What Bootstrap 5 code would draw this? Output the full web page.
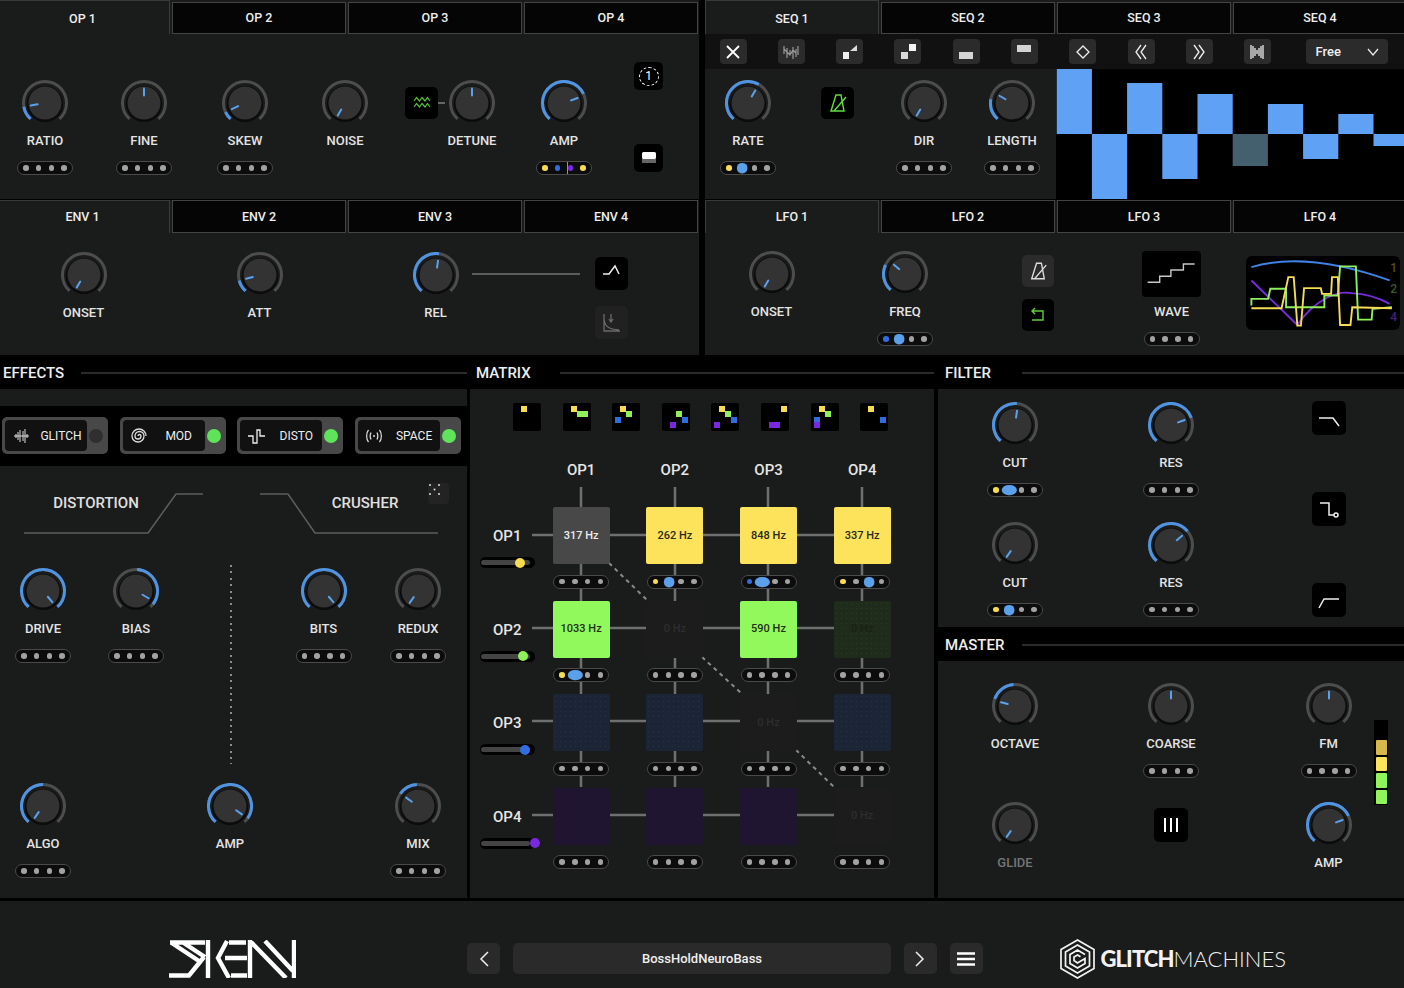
<!doctype html>
<html lang="en">
<head>
<meta charset="utf-8">
<title>Sken</title>
<link href="https://cdn.jsdelivr.net/npm/bootstrap@5.3.0/dist/css/bootstrap.min.css" rel="stylesheet">
<style>
:root{--pnl:#1a1b1b;--blk:#000;--lin:#6f6f6f}
html,body{background:#000;margin:0;height:100%;overflow:hidden}
body{font-family:Roboto,"Liberation Sans",sans-serif;font-weight:500;color:#e6e6e6}
.synth{width:1404px;height:988px;overflow:hidden;display:flex;flex-direction:column}
.toprow{display:grid;grid-template-columns:699px 699px;column-gap:6px;grid-template-rows:199px 155px;row-gap:1px;height:355px}
.pane{background:var(--pnl);min-width:0}
.tabs{display:grid;grid-template-columns:170px 174px 174px 174px;column-gap:2px;height:34px;background:var(--pnl)}
.tabs.rt{grid-template-columns:174px 174px 174px 174px}
.tabs .nav-link{display:flex;align-items:center;justify-content:center;padding:1px 0 0;color:#eee;font-size:12.5px;background:#050505;border:1.5px solid #444;border-radius:0;margin-top:2px}
.tabs .nav-link.active{background:var(--pnl);border-bottom:0;border-left:0;border-color:#3a3a3a;margin-top:0;padding:3px 4px 0 0}
.tabs.rt .nav-link.active{border-left:1.5px solid #3a3a3a;padding-right:0}
.tabs.env{height:33px}.tabs.env .nav-link{margin-top:0;padding-top:1px}
.kgrid{display:grid;align-items:start}
.kcell{display:flex;flex-direction:column;align-items:center;min-width:0}
.kn{width:46px;height:46px;flex:none;display:block}
.klab{margin-top:7px;height:16px;line-height:16px;font-size:13px;white-space:nowrap;color:#e4e4e4}
.klab.off{color:#767676}
.klab.wv{margin-top:7px}
.dots{margin-top:12px;flex:none;width:56px;height:14px;border:1.5px solid #4a4a4a;border-radius:8px;background:#0c0c0c;display:flex;align-items:center;justify-content:center;gap:7.2px;position:relative;z-index:2}
.dots i{display:block;width:5.6px;height:5.6px;border-radius:50%;background:#a2a2a2;position:relative}
.dots i.y{background:#f7dc50}.dots i.b{background:#2f6de0}.dots i.p{background:#7a28e0}
.dots i.p::before{content:"";position:absolute;left:-1px;top:-3px;width:1.5px;height:11.6px;background:#5aa0ea}
.dots i.B{background:#5aa0ea;transform:scale(1.75)}
.dots i.E{background:#5aa0ea;transform:scale(2.5,1.7)}
.ibtn{background:#000;border:0;border-radius:5px;padding:0;display:flex;align-items:center;justify-content:center;color:#fff;flex:none}
.ibtn.gr{background:#2b2b2b}
.ibtn.dm{background:#212121}
.ibtn svg{display:block}
.opgrid{grid-template-columns:90px 108px 94px 106px 47px 54px 130px 39px;padding-top:46px}
.wavecell{display:flex;align-items:center;padding-left:7px;margin-top:7px}
.wavecell .ibtn{width:33px;height:32px}
.wavecell b{display:block;width:8px;height:2px;background:#666}
.sidebtns{display:flex;flex-direction:column;align-items:center;justify-content:space-between;height:110px;margin-top:-18px}
.sidebtns .ibtn{width:29px;height:28px}
.dashone{width:20px;height:19px;border:1.5px dashed #fff;border-radius:50%;display:flex;align-items:center;justify-content:center;font-size:12px;line-height:1;color:#fff}
.seqbar{height:35px;background:#111;display:flex;align-items:center;padding-left:14.5px;gap:31.3px}
.seqbar .ibtn{width:27px;height:25px;border-radius:4px;background:#2b2b2b}
.seqsel{margin-left:4px;width:82px;height:25px;border-radius:4px;background:#2b2b2b;color:#f0f0f0;font-size:13px;font-weight:500;border:0;padding:0 9px;display:flex;justify-content:space-between;align-items:center}
.seqbody{display:flex;height:130px}
.seqknobs{width:351px;flex:none;padding-top:11px;grid-template-columns:86px 92px 82px 94px}
.metro{width:33px;height:32px;margin-top:7px}
.seqsteps{flex:1;background:#000;display:block;height:131px}
.envgrid{grid-template-columns:167px 185px 167px 75px 35px;padding-top:19px}
.envline{height:2px;background:#5c5c5c;width:108px;margin-left:-47px;margin-top:21px}
.envbtns{display:flex;flex-direction:column;align-items:center;gap:16px;margin-top:5px}
.envbtns .ibtn{width:33px;height:33px}
.lfogrid{grid-template-columns:133px 134px 133px 133px 160px;padding-top:18px}
.lfobtns{display:flex;flex-direction:column;align-items:center;gap:12px;margin-top:4px;padding-right:1px}
.lfobtns .ibtn{width:32px;height:32px}
.wavebox{width:59px;height:46px;background:#000;border-radius:4px}
.scope{position:relative;width:154px;height:74px;background:#000;border-radius:6px;margin:5px 0 0 8px;overflow:hidden}
.scope svg{display:block}
.scope span{position:absolute;right:3px;font-size:12px;line-height:12px}
.midrow{display:flex;height:546px;flex:none}
.midcol{display:flex;flex-direction:column;flex:none;height:543px}
.shead{height:34px;flex:none;display:flex;align-items:center;padding-left:3px;padding-top:2px;background:#000;font-size:15px;color:#eee}
.shead b{font-weight:500}
.shead hr{margin:0;opacity:1;border:0;height:2px;background:#2b2b2b;flex:1}
.fxsub{height:17px;background:var(--pnl);flex:none}
.fxrow{height:60px;flex:none;padding:11px 0 0 2px;display:flex;gap:11.7px}
.fxbtn{width:106px;height:37px;padding:3px;border-radius:5px;background:#484848;border:0;display:flex;align-items:center;color:#eee}
.fxin{width:82px;height:31px;background:#111;border-radius:4px;display:flex;align-items:center;flex:none;font-size:12px}
.fxin .ico{width:30px;display:flex;justify-content:center;flex:none;padding-left:2px}
.fxin .txt{flex:1;text-align:center}
.led{width:14px;height:14px;border-radius:50%;margin-left:2px;background:#5fe35a;flex:none}
.led.off{background:#2f2f2f}
.fxpane{flex:1;position:relative}
.fxcurve{height:102px;position:relative}
.fxcurve svg{position:absolute;inset:0}
.fxtitle{position:absolute;top:28px;font-size:15px;line-height:18px;transform:translateX(-50%);color:#e0e0e0}
.dice{position:absolute;left:428px;top:17px;width:21px;height:21px;background:#232323;border-radius:4px;display:flex;align-items:center;justify-content:center}
.fxgrid{display:grid;grid-template-columns:86px 100px 90px 95px 94px;grid-template-rows:215px auto}
.dotline{justify-self:center;width:2px;height:199px;margin-top:-3px;background:repeating-linear-gradient(to bottom,#8c8c8c 0 2px,transparent 2px 6.4px)}
.nudge{margin-right:2px}
.mxpane{flex:1;padding-top:14px;position:relative;overflow:hidden}
.mxlines{position:absolute;left:0;top:0;z-index:0}
.mxpre{display:flex;gap:21.6px;padding-left:43px;position:relative;z-index:1}
.mxpre svg{display:block;flex:none}
.mxtop{display:grid;grid-template-columns:64.3px repeat(4,93.7px);margin-top:30px;position:relative;z-index:1;height:46px;font-size:15px;line-height:18px;text-align:center;color:#e6e6e6}
.mxgrid{display:grid;grid-template-columns:64.3px repeat(4,93.7px);grid-auto-rows:93.5px;position:relative;z-index:1}
.mxrow{padding-left:23px;font-size:15px;line-height:18px;padding-top:20px;position:relative;color:#e6e6e6}
.mxsl{position:absolute;left:10px;top:50px;width:55px;height:11px;border-radius:6px;background:#000;display:flex;align-items:center;padding:0 1px}
.mxsl::before{content:"";display:block;height:5px;width:49px;background:#444;border-radius:3px}
.mxsl i{position:absolute;top:.5px;width:10px;height:10px;border-radius:50%;display:block}
.mxc{display:flex;flex-direction:column;align-items:center}
.mxsq{width:57px;height:57px;border-radius:2px;display:flex;align-items:center;justify-content:center;font-size:11px;padding-top:1px;background:#1c1c1c;color:#2e2e2e;flex:none}
.mxsq.a{background:#484848;color:#eee}
.mxsq.y{background:#fde35c;color:#2a2a20}
.mxsq.g{background:#92f95d;color:#223018}
.mxsq.gd{background:#1f2c1c radial-gradient(#2b3e24 .5px,transparent .6px) 0 0/5px 5px;color:#18220f}
.mxsq.bd{background:#1b2536 radial-gradient(#243450 .5px,transparent .6px) 0 0/5px 5px}
.mxsq.pd{background:#1f1530}
.mxc .dots{margin-top:10.5px}
.ftpane{height:238px;flex:none;padding-top:13px}
.fltgrid{grid-template-columns:154px 158px 154px;row-gap:24px}
.fltbtns{grid-row:1 / span 2;grid-column:3;height:216px;margin-top:-1px;display:flex;flex-direction:column;justify-content:space-between;padding-left:62px}
.fltbtns .ibtn{width:34px;height:34px}
.mstpane{flex:1;padding:22px 0 0 33px}
.mstgrid{grid-template-columns:88px 224px 91px 14px;row-gap:24px}
.meter{grid-column:4;grid-row:1 / span 2;margin-top:37px;width:14px;height:85px;background:#000;display:flex;flex-direction:column;justify-content:flex-end;gap:2px;padding:0 1.5px 1px}
.meter i{height:14.5px;display:block;border-radius:1px}
.mstbtn{width:34px;height:34px;margin-top:6px}
.foot{height:87px;flex:none;background:var(--pnl);display:flex;align-items:flex-start;padding:38px 0 0 168px}
.footlogo{width:128px;height:38px;margin-top:1px;flex:none}
.foot .btn{height:31px;padding:0;border:0;background:#2a2a2a;border-radius:5px;color:#f0f0f0;display:flex;align-items:center;justify-content:center;margin-top:4px}
.foot .navb{width:33px;flex:none}
.foot .preset{width:378px;font-size:13px;font-weight:500;padding-top:1px;margin:4px 12.5px 0 13px}
.brand{display:flex;align-items:center;margin-left:77px;height:40px;flex:none}
.brandname{font-family:Lato,"Liberation Sans",sans-serif;font-size:22px;line-height:1;color:#f2f2f2;margin-left:6px;font-weight:300;white-space:nowrap}
.brandname b{font-weight:900;letter-spacing:-.9px}
</style>
</head>
<body>
<div class="synth">
  <section class="toprow">
    <div class="pane">
      <nav class="nav tabs"><a class="nav-link active">OP 1</a><a class="nav-link">OP 2</a><a class="nav-link">OP 3</a><a class="nav-link">OP 4</a></nav>
      <div class="kgrid opgrid">
        <div class="kcell"><div class="kn" data-k="-100,-138,-100"></div><div class="klab">RATIO</div><div class="dots" data-d="...."></div></div>
        <div class="kcell"><div class="kn" data-k="0,0,0"></div><div class="klab">FINE</div><div class="dots" data-d="...."></div></div>
        <div class="kcell"><div class="kn" data-k="-115,-138,-115"></div><div class="klab">SKEW</div><div class="dots" data-d="...."></div></div>
        <div class="kcell"><div class="kn" data-k="-150,0,0"></div><div class="klab">NOISE</div></div>
        <div class="wavecell"><button class="ibtn" aria-label="Noise"><svg width="20" height="16" viewBox="0 0 20 16" fill="none" stroke="#55c23c" stroke-width="1.2"><path d="M2 6 4.500 2.500l3 3.500 2.500-3.500 3 3.500 2.500-3.500L18 6"/><path d="M2 12 4.500 8.500l3 3.500 2.500-3.500 3 3.500 2.500-3.500L18 12"/></svg></button><b></b></div>
        <div class="kcell"><div class="kn" data-k="0,0,0"></div><div class="klab">DETUNE</div></div>
        <div class="kcell"><div class="kn" data-k="70,-138,65"></div><div class="klab">AMP</div><div class="dots" data-d="ybpy"></div></div>
        <div class="sidebtns">
          <button class="ibtn"><span class="dashone">1</span></button>
          <button class="ibtn" aria-label="Bypass"><svg width="16" height="12" viewBox="0 0 16 12"><rect x="1" y="0" width="14" height="7" rx="1.5" fill="#fff"/><rect x="1" y="7" width="14" height="4" fill="#666"/></svg></button>
        </div>
      </div>
    </div>
    <div class="pane">
      <nav class="nav tabs rt"><a class="nav-link active">SEQ 1</a><a class="nav-link">SEQ 2</a><a class="nav-link">SEQ 3</a><a class="nav-link">SEQ 4</a></nav>
      <div class="seqbar">
        <button class="ibtn" aria-label="Clear"><svg width="14" height="14" viewBox="0 0 14 14" stroke="#fff" stroke-width="1.8"><path d="M1 1l12 12M13 1 1 13"/></svg></button>
        <button class="ibtn" aria-label="Glitch"><svg width="18" height="16" viewBox="0 0 18 16" fill="none" stroke="#999" stroke-width="1.2"><path d="M2 2v8M5 4v10M8 6v6M11 3v12M14 5v8M16 2v9M2 5l3 3 3 3 3-5 3 3"/></svg></button>
        <button class="ibtn" aria-label="Ramp"><svg width="16" height="16" viewBox="0 0 16 16"><path d="M1 8h6v7H1z" fill="#eee"/><path d="M15 1v6H8z" fill="#ddd"/></svg></button>
        <button class="ibtn" aria-label="Random"><svg width="18" height="17" viewBox="0 0 18 17"><rect x="10" y="1" width="7" height="7" fill="#f4f4f4"/><rect x="2" y="9" width="7" height="7" fill="#d8d8d8"/></svg></button>
        <button class="ibtn" aria-label="Low"><svg width="14" height="14" viewBox="0 0 14 14"><rect y="7" width="14" height="7" fill="#d4d4d4"/></svg></button>
        <button class="ibtn" aria-label="High"><svg width="14" height="14" viewBox="0 0 14 14"><rect y="0" width="14" height="7" fill="#d4d4d4"/></svg></button>
        <button class="ibtn" aria-label="Reset"><svg width="14" height="14" viewBox="0 0 14 14" fill="none" stroke="#eee" stroke-width="1.3"><path d="M7 1l6 6-6 6-6-6z"/></svg></button>
        <button class="ibtn" aria-label="Shift left"><svg width="14" height="16" viewBox="0 0 14 16" fill="none" stroke="#eee" stroke-width="1.3"><path d="M7 1 2 8l5 7M12 1 7 8l5 7"/></svg></button>
        <button class="ibtn" aria-label="Shift right"><svg width="14" height="16" viewBox="0 0 14 16" fill="none" stroke="#eee" stroke-width="1.3"><path d="M2 1l5 7-5 7M7 1l5 7-5 7"/></svg></button>
        <button class="ibtn" aria-label="Mirror"><svg width="15" height="14" viewBox="0 0 15 14" stroke="#ddd" stroke-width="1.4"><path d="M1 0v14M3 1v12M5 3v8M7 5v4M9 3v8M11 1v12M13 0v14"/></svg></button>
        <button class="seqsel btn">Free<svg width="12" height="8" viewBox="0 0 12 8" fill="none" stroke="#eee" stroke-width="1.2"><path d="M1 1l5 6 5-6"/></svg></button>
      </div>
      <div class="seqbody">
        <div class="kgrid seqknobs">
          <div class="kcell"><div class="kn" data-k="30,-138,30"></div><div class="klab">RATE</div><div class="dots" data-d="yB.."></div></div>
          <div class="kcell"><button class="ibtn metro" aria-label="Sync"><svg width="33" height="32" viewBox="0 0 33 32" fill="none" stroke="#5fe03c" stroke-width="1.4"><path d="M10 24 15 8h5l3 16zM13 24 25 10"/></svg></button></div>
          <div class="kcell"><div class="kn" data-k="-150,0,0"></div><div class="klab">DIR</div><div class="dots" data-d="...."></div></div>
          <div class="kcell"><div class="kn" data-k="-60,-138,-80"></div><div class="klab">LENGTH</div><div class="dots" data-d="...."></div></div>
        </div>
        <svg class="seqsteps" viewBox="0 0 348 131" aria-label="Steps">
          <g fill="#5fa2f5"><rect x="0.7" y="0" width="35.2" height="65"/><rect x="35.9" y="65" width="35.2" height="65"/><rect x="71.1" y="14" width="35.2" height="51"/><rect x="106.3" y="65" width="35.2" height="45"/><rect x="141.5" y="25" width="35.2" height="40"/><rect x="176.7" y="65" width="35.2" height="32" fill="#44606f"/><rect x="211.9" y="35" width="35.2" height="30"/><rect x="247.1" y="65" width="35.2" height="25"/><rect x="282.3" y="45" width="35.2" height="20"/><rect x="317.5" y="65" width="31" height="12"/></g>
        </svg>
      </div>
    </div>
    <div class="pane">
      <nav class="nav tabs env"><a class="nav-link active">ENV 1</a><a class="nav-link">ENV 2</a><a class="nav-link">ENV 3</a><a class="nav-link">ENV 4</a></nav>
      <div class="kgrid envgrid">
        <div class="kcell"><div class="kn" data-k="-150,0,0"></div><div class="klab">ONSET</div></div>
        <div class="kcell"><div class="kn" data-k="-105,-138,-105"></div><div class="klab">ATT</div></div>
        <div class="kcell"><div class="kn" data-k="8,-138,8"></div><div class="klab">REL</div></div>
        <div class="envline"></div>
        <div class="envbtns">
          <button class="ibtn" aria-label="Attack"><svg width="33" height="33" viewBox="0 0 33 33" fill="none" stroke="#eee" stroke-width="1.5"><path d="M8 17h6l6-8 4 8"/></svg></button>
          <button class="ibtn dm" aria-label="Decay"><svg width="33" height="33" viewBox="0 0 33 33" fill="none" stroke="#6a6a6a" stroke-width="1.3"><path d="M9 8v17h16M9 13c1 9 6 10 15 11M16 8v8M14 13l2 3 2-3"/></svg></button>
        </div>
      </div>
    </div>
    <div class="pane">
      <nav class="nav tabs rt env"><a class="nav-link active">LFO 1</a><a class="nav-link">LFO 2</a><a class="nav-link">LFO 3</a><a class="nav-link">LFO 4</a></nav>
      <div class="kgrid lfogrid">
        <div class="kcell"><div class="kn" data-k="-150,0,0"></div><div class="klab">ONSET</div></div>
        <div class="kcell"><div class="kn" data-k="-50,-138,-65"></div><div class="klab">FREQ</div><div class="dots" data-d="bB.."></div></div>
        <div class="lfobtns">
          <button class="ibtn gr" aria-label="Sync"><svg width="32" height="32" viewBox="0 0 33 32" fill="none" stroke="#ddd" stroke-width="1.4"><path d="M10 24 15 8h5l3 16zM13 24 25 10"/></svg></button>
          <button class="ibtn" aria-label="Loop"><svg width="32" height="32" viewBox="0 0 32 32" fill="none" stroke="#5fd03c" stroke-width="1.4"><path d="M10 12h11v9H10M13 9l-3 3 3 3"/></svg></button>
        </div>
        <div class="kcell"><div class="wavebox"><svg width="59" height="46" viewBox="0 0 59 46" fill="none" stroke="#c8c8c8" stroke-width="1.4"><path d="M5.6 31.3H17.7V25.3H28.9V19H41.4V13H52.6"/></svg></div><div class="klab wv">WAVE</div><div class="dots" data-d="...."></div></div>
        <div class="scope">
          <svg width="154" height="74" viewBox="1216 172 342 221" preserveAspectRatio="none" fill="none" stroke-width="1.9">
            <path vector-effect="non-scaling-stroke" stroke="#3f83e6" d="M1228 205C1290 180 1390 175 1535 245"/>
            <path vector-effect="non-scaling-stroke" stroke="#7a2be0" d="M1228 245 1330 378C1370 300 1420 275 1450 283 1490 285 1515 300 1535 315"/>
            <path vector-effect="non-scaling-stroke" stroke="#8ef05a" d="M1228 320V300H1265L1270 270H1305V325H1390V290H1420L1425 203H1460L1465 362H1495L1497 330 1540 325"/>
            <path vector-effect="non-scaling-stroke" stroke="#f5dc55" d="M1228 328H1295L1310 235H1322L1330 380H1338L1345 268H1382L1385 285H1405L1407 235H1420L1425 378H1448L1452 325 1540 328"/>
          </svg>
          <span style="top:6px;color:#5a4e1c">1</span><span style="top:27px;color:#3b5a2a">2</span><span style="top:55px;color:#44207a">4</span>
        </div>
      </div>
    </div>
  </section>

  <section class="midrow">
    <div class="midcol" style="width:467px;margin-right:3px">
      <div class="shead"><b style="width:78px">EFFECTS</b><hr></div>
      <div class="fxsub"></div>
      <div class="fxrow">
        <button class="btn fxbtn"><span class="fxin"><span class="ico"><svg width="17" height="14" viewBox="0 0 17 14" fill="none" stroke="#ddd" stroke-width="1"><path d="M1 7h15M3 5v4M5 3v8M7 1v12M10 2v10M12 0v14M14 5v4"/></svg></span><span class="txt">GLITCH</span></span><span class="led off"></span></button>
        <button class="btn fxbtn"><span class="fxin"><span class="ico"><svg width="20" height="16" viewBox="0 0 20 16" fill="none" stroke="#ddd" stroke-width="1.3"><path d="M9 8a1.500 1.500 0 0 1 3 0a3 3 0 0 1-6 0a4.500 4.500 0 0 1 9 0a6 6 0 0 1-12 0a7 7 0 0 1 14 0"/></svg></span><span class="txt">MOD</span></span><span class="led"></span></button>
        <button class="btn fxbtn"><span class="fxin"><span class="ico"><svg width="18" height="16" viewBox="0 0 18 16" fill="none" stroke="#eee" stroke-width="1.3"><path d="M1 8H6V15H10V2H13V8H18"/></svg></span><span class="txt">DISTO</span></span><span class="led"></span></button>
        <button class="btn fxbtn"><span class="fxin"><span class="ico"><svg width="18" height="14" viewBox="0 0 18 14" fill="none" stroke="#ddd" stroke-width="1.2"><path d="M3.500 1C1 4 1 10 3.500 13M6 3.500C5 5.500 5 8.500 6 10.500M14.500 1C17 4 17 10 14.500 13M12 3.500c1 2 1 5 0 7"/><circle cx="9" cy="7" r="1" fill="#ddd" stroke="none"/></svg></span><span class="txt">SPACE</span></span><span class="led"></span></button>
      </div>
      <div class="pane fxpane">
        <div class="fxcurve">
          <svg width="466" height="102" viewBox="0 0 466 102" fill="none" stroke="#5e5e5e" stroke-width="1.5"><path d="M24 67H148L176 28H203"/><path d="M260 28H288L315 67H438"/></svg>
          <div class="fxtitle" style="left:96px">DISTORTION</div>
          <div class="fxtitle" style="left:365px">CRUSHER</div>
          <div class="dice"><svg width="13" height="13" viewBox="0 0 13 13" fill="#ddd"><circle cx="2" cy="2" r="1"/><circle cx="11" cy="2" r="1"/><circle cx="6.500" cy="6.500" r="1"/><circle cx="2" cy="11" r="1"/><circle cx="11" cy="11" r="1"/></svg></div>
        </div>
        <div class="fxgrid">
          <div class="kcell"><div class="kn" data-k="140,-138,138"></div><div class="klab">DRIVE</div><div class="dots" data-d="...."></div></div>
          <div class="kcell"><div class="kn" data-k="120,3,128"></div><div class="klab">BIAS</div><div class="dots" data-d="...."></div></div>
          <div class="dotline"></div>
          <div class="kcell"><div class="kn" data-k="140,-138,138"></div><div class="klab">BITS</div><div class="dots" data-d="...."></div></div>
          <div class="kcell"><div class="kn" data-k="-145,0,0"></div><div class="klab">REDUX</div><div class="dots" data-d="...."></div></div>
          <div class="kcell"><div class="kn" data-k="-145,-138,0"></div><div class="klab">ALGO</div><div class="dots" data-d="...."></div></div>
          <div></div>
          <div class="kcell nudge"><div class="kn" data-k="125,-138,125"></div><div class="klab">AMP</div></div>
          <div></div>
          <div class="kcell"><div class="kn" data-k="-55,-55,-3"></div><div class="klab">MIX</div><div class="dots" data-d="...."></div></div>
        </div>
      </div>
    </div>

    <div class="midcol" style="width:464px;margin-right:4px">
      <div class="shead" style="padding-left:6px"><b style="width:84px">MATRIX</b><hr></div>
      <div class="pane mxpane">
        <svg class="mxlines" width="464" height="509" viewBox="0 0 464 509" fill="none">
          <g stroke="#6f6f6f" stroke-width="2.5"><path d="M111 98V398M205 98V398M298 98V398M392 98V398M62 146H364M62 239H364M62 332H364M62 426H364"/></g>
          <g stroke="#8a8a8a" stroke-width="2" stroke-dasharray="4 4"><path d="M139 174 177 211M232 268 271 304M326 361 364 398"/></g>
        </svg>
        <div class="mxpre">
          <svg width="28" height="28" viewBox="0 0 28 28"><rect width="28" height="28" rx="2"/><rect x="8" y="3" width="6" height="6" fill="#f7dc50"/></svg>
          <svg width="28" height="28" viewBox="0 0 28 28"><rect width="28" height="28" rx="2"/><rect x="8" y="3" width="6" height="6" fill="#f7dc50"/><rect x="14" y="8" width="11" height="6" fill="#8ef05a"/></svg>
          <svg width="28" height="28" viewBox="0 0 28 28"><rect width="28" height="28" rx="2"/><rect x="8" y="3" width="6" height="6" fill="#f7dc50"/><rect x="14" y="8" width="6" height="6" fill="#8ef05a"/><rect x="3" y="14" width="6" height="6" fill="#2f6de0"/></svg>
          <svg width="28" height="28" viewBox="0 0 28 28"><rect width="28" height="28" rx="2"/><rect x="14" y="8" width="6" height="6" fill="#8ef05a"/><rect x="20" y="14" width="6" height="6" fill="#2f6de0"/><rect x="8" y="19" width="6" height="6" fill="#7a28e0"/></svg>
          <svg width="28" height="28" viewBox="0 0 28 28"><rect width="28" height="28" rx="2"/><rect x="8" y="3" width="6" height="6" fill="#f7dc50"/><rect x="14" y="8" width="6" height="6" fill="#8ef05a"/><rect x="20" y="14" width="6" height="6" fill="#2f6de0"/><rect x="3" y="19" width="6" height="6" fill="#7a28e0"/></svg>
          <svg width="28" height="28" viewBox="0 0 28 28"><rect width="28" height="28" rx="2"/><rect x="20" y="3" width="6" height="6" fill="#f7dc50"/><rect x="8" y="19" width="11" height="6" fill="#7a28e0"/></svg>
          <svg width="28" height="28" viewBox="0 0 28 28"><rect width="28" height="28" rx="2"/><rect x="8" y="3" width="6" height="6" fill="#f7dc50"/><rect x="14" y="8" width="6" height="6" fill="#8ef05a"/><rect x="3" y="14" width="6" height="6" fill="#2f6de0"/><rect x="3" y="19" width="6" height="6" fill="#7a28e0"/></svg>
          <svg width="28" height="28" viewBox="0 0 28 28"><rect width="28" height="28" rx="2"/><rect x="8" y="3" width="6" height="6" fill="#f7dc50"/><rect x="20" y="14" width="6" height="6" fill="#2f6de0"/></svg>
        </div>
        <div class="mxtop"><span></span><span>OP1</span><span>OP2</span><span>OP3</span><span>OP4</span></div>
        <div class="mxgrid">
          <div class="mxrow">OP1<span class="mxsl"><i style="left:35px;background:#f7dc50"></i></span></div>
          <div class="mxc"><div class="mxsq a">317 Hz</div><div class="dots" data-d="...."></div></div>
          <div class="mxc"><div class="mxsq y">262 Hz</div><div class="dots" data-d="yB.."></div></div>
          <div class="mxc"><div class="mxsq y">848 Hz</div><div class="dots" data-d="bE.."></div></div>
          <div class="mxc"><div class="mxsq y">337 Hz</div><div class="dots" data-d="y.B."></div></div>

          <div class="mxrow">OP2<span class="mxsl"><i style="left:38px;background:#8ef05a"></i></span></div>
          <div class="mxc"><div class="mxsq g">1033 Hz</div><div class="dots" data-d="yE.."></div></div>
          <div class="mxc"><div class="mxsq">0 Hz</div><div class="dots" data-d="...."></div></div>
          <div class="mxc"><div class="mxsq g">590 Hz</div><div class="dots" data-d="...."></div></div>
          <div class="mxc"><div class="mxsq gd">0 Hz</div><div class="dots" data-d="...."></div></div>

          <div class="mxrow">OP3<span class="mxsl"><i style="left:40px;background:#2f6de0"></i></span></div>
          <div class="mxc"><div class="mxsq bd"></div><div class="dots" data-d="...."></div></div>
          <div class="mxc"><div class="mxsq bd"></div><div class="dots" data-d="...."></div></div>
          <div class="mxc"><div class="mxsq">0 Hz</div><div class="dots" data-d="...."></div></div>
          <div class="mxc"><div class="mxsq bd"></div><div class="dots" data-d="...."></div></div>

          <div class="mxrow">OP4<span class="mxsl"><i style="left:50px;background:#7a28e0"></i></span></div>
          <div class="mxc"><div class="mxsq pd"></div><div class="dots" data-d="...."></div></div>
          <div class="mxc"><div class="mxsq pd"></div><div class="dots" data-d="...."></div></div>
          <div class="mxc"><div class="mxsq pd"></div><div class="dots" data-d="...."></div></div>
          <div class="mxc"><div class="mxsq">0 Hz</div><div class="dots" data-d="...."></div></div>
        </div>
      </div>
    </div>

    <div class="midcol" style="width:466px">
      <div class="shead" style="padding-left:7px"><b style="width:77px">FILTER</b><hr></div>
      <div class="pane ftpane">
        <div class="kgrid fltgrid">
          <div class="kcell"><div class="kn" data-k="8,-138,5"></div><div class="klab">CUT</div><div class="dots" data-d="yE.."></div></div>
          <div class="kcell"><div class="kn" data-k="70,-138,70"></div><div class="klab">RES</div><div class="dots" data-d="...."></div></div>
          <div class="fltbtns">
            <button class="ibtn" aria-label="Low pass"><svg width="34" height="34" viewBox="0 0 34 34" fill="none" stroke="#eee" stroke-width="1.5"><path d="M7 17H21L27 25"/></svg></button>
            <button class="ibtn" aria-label="Notch"><svg width="34" height="34" viewBox="0 0 34 34" fill="none" stroke="#eee" stroke-width="1.5"><path d="M8 11H17V23H22"/><circle cx="24" cy="23" r="2"/></svg></button>
            <button class="ibtn" aria-label="High pass"><svg width="34" height="34" viewBox="0 0 34 34" fill="none" stroke="#eee" stroke-width="1.5"><path d="M7 25 12 16H27"/></svg></button>
          </div>
          <div class="kcell"><div class="kn" data-k="-145,0,0"></div><div class="klab">CUT</div><div class="dots" data-d="yB.."></div></div>
          <div class="kcell"><div class="kn" data-k="50,-138,50"></div><div class="klab">RES</div><div class="dots" data-d="...."></div></div>
        </div>
      </div>
      <div class="shead" style="padding-left:7px"><b style="width:77px">MASTER</b><hr></div>
      <div class="pane mstpane">
        <div class="kgrid mstgrid">
          <div class="kcell"><div class="kn" data-k="-75,-70,-4"></div><div class="klab">OCTAVE</div></div>
          <div class="kcell"><div class="kn" data-k="0,0,0"></div><div class="klab">COARSE</div><div class="dots" data-d="...."></div></div>
          <div class="kcell"><div class="kn" data-k="0,0,0"></div><div class="klab">FM</div><div class="dots" data-d="...."></div></div>
          <div class="meter"><i style="background:#d9b84b"></i><i style="background:#fce35c"></i><i style="background:#8ff55b"></i><i style="background:#8ff55b"></i></div>
          <div class="kcell"><div class="kn" data-k="-145,0,0"></div><div class="klab off">GLIDE</div></div>
          <div class="kcell"><button class="ibtn mstbtn" aria-label="Voices"><svg width="34" height="34" viewBox="0 0 34 34" stroke="#fff" stroke-width="2"><path d="M11 10V24M17 10V24M23 10V24"/></svg></button></div>
          <div class="kcell"><div class="kn" data-k="70,-138,65"></div><div class="klab">AMP</div></div>
        </div>
      </div>
    </div>
  </section>

  <footer class="foot">
    <svg class="footlogo" viewBox="168 940 128 38" fill="none" stroke="#fff" role="img" aria-label="Sken logo">
      <path stroke-width="4.4" d="M170 942.500H205M171 942.500 202 963M183 942.500 205 957M204 957 189 975.500H169"/>
      <path stroke-width="4.4" d="M208 940V978M227 941 218 958 229 978"/>
      <path stroke-width="4.4" d="M229 942.500H246M225 958H247M231 975.500H247"/>
      <path stroke-width="4.4" d="M250 940V978M250 941 286 978M265 941 293 971M294 940V978"/>
    </svg>
    <button class="btn navb" style="margin-left:171px" aria-label="Previous"><svg width="10" height="16" viewBox="0 0 10 16" fill="none" stroke="#eee" stroke-width="1.500"><path d="M9 1 2 8l7 7"/></svg></button>
    <button class="btn preset">BossHoldNeuroBass</button>
    <button class="btn navb" aria-label="Next"><svg width="10" height="16" viewBox="0 0 10 16" fill="none" stroke="#eee" stroke-width="1.500"><path d="M1 1l7 7-7 7"/></svg></button>
    <button class="btn navb" style="margin-left:13px" aria-label="Menu"><svg width="18" height="14" viewBox="0 0 18 14" stroke="#fff" stroke-width="2.400"><path d="M0 1.500H18M0 7H18M0 12.500H18"/></svg></button>
    <div class="brand">
      <svg width="35" height="40" viewBox="0 0 35 40" fill="none" stroke="#f2f2f2" stroke-width="1.700" role="img" aria-label="Glitch Machines logo"><path d="M17.500 1 34 10.500V29.500L17.500 39 1 29.500V10.500z"/><path d="M17.500 6 29.500 13V27L17.500 34 5.500 27V13z"/><path d="M25 15.500 17.500 11 10 15.500V24.500L17.500 29 25 24.500V19.500L17.500 24 14 21.500V18l3.500-2 3 1.800"/></svg>
      <span class="brandname"><b>GLITCH</b>MACHINES</span>
    </div>
  </footer>
</div>
<script>
(function(){
  function pt(r,a){var t=(a-90)*Math.PI/180;return (23+r*Math.cos(t)).toFixed(2)+' '+(23+r*Math.sin(t)).toFixed(2);}
  function arc(a0,a1,c){var r=21.5;return '<path d="M'+pt(r,a0)+'A'+r+' '+r+' 0 '+((a1-a0)>180?1:0)+' 1 '+pt(r,a1)+'" stroke="'+c+'" stroke-width="3" fill="none"/>';}
  document.querySelectorAll('.kn').forEach(function(el){
    var v=el.dataset.k.split(',').map(Number),s='<svg width="46" height="46" viewBox="0 0 46 46">';
    s+=arc(-138,138,'#4d4d4d');
    if(v[1]!==v[2])s+=arc(v[1],v[2],'#4f94e3');
    s+='<circle cx="23" cy="24" r="18" fill="#0b0b0b"/><circle cx="23" cy="23" r="16.500" fill="#333"/>';
    s+='<path d="M'+pt(7.5,v[0])+'L'+pt(14.5,v[0])+'" stroke="#5aa2ee" stroke-width="2" stroke-linecap="round"/></svg>';
    el.innerHTML=s;
  });
  document.querySelectorAll('.dots').forEach(function(el){
    el.innerHTML=el.dataset.d.split('').map(function(c){return '<i'+(c==='.'?'':' class="'+c+'"')+'></i>';}).join('');
  });
})();
</script>
<script src="https://cdn.jsdelivr.net/npm/bootstrap@5.3.0/dist/js/bootstrap.bundle.min.js"></script>
</body>
</html>
